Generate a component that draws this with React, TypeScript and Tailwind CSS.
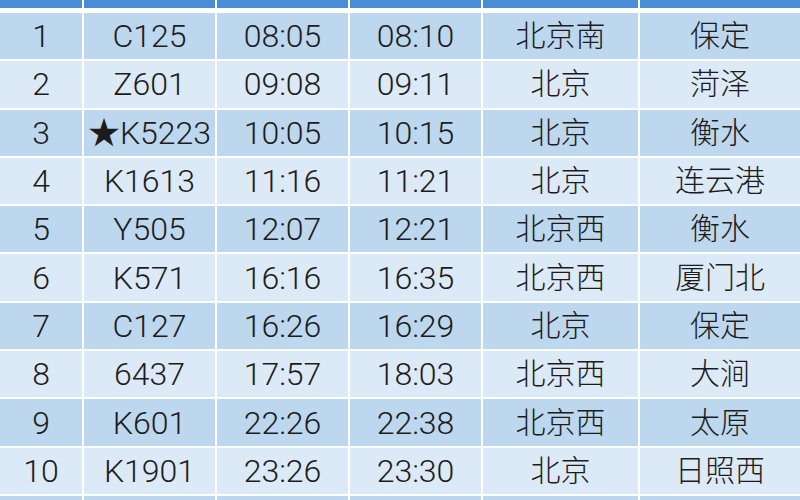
const rows = [
  ['1', 'C125', '08:05', '08:10', '北京南', '保定'],
  ['2', 'Z601', '09:08', '09:11', '北京', '菏泽'],
  ['3', '★K5223', '10:05', '10:15', '北京', '衡水'],
  ['4', 'K1613', '11:16', '11:21', '北京', '连云港'],
  ['5', 'Y505', '12:07', '12:21', '北京西', '衡水'],
  ['6', 'K571', '16:16', '16:35', '北京西', '厦门北'],
  ['7', 'C127', '16:26', '16:29', '北京', '保定'],
  ['8', '6437', '17:57', '18:03', '北京西', '大涧'],
  ['9', 'K601', '22:26', '22:38', '北京西', '太原'],
  ['10', 'K1901', '23:26', '23:30', '北京', '日照西'],
  ['', '', '', '', '', ''],
];

const cols = 'grid grid-cols-[82px_131px_131px_131px_155px_1fr] gap-x-[2px]';

export default function App() {
  return (
    <div className="w-[800px] h-[500px] overflow-hidden bg-white font-['Roboto','Liberation_Sans','Noto_Sans_CJK_SC',sans-serif] text-[#1c1c1c]">
      {/* header row, mostly cut off */}
      <div className={cols}>
        {Array.from({ length: 6 }).map((_, i) => (
          <div key={i} className="h-[8px] bg-[#4a8dd5]" />
        ))}
      </div>

      <div className="mt-[5px] flex flex-col gap-y-[2px]">
        {rows.map((r, i) => (
          <div key={i} className={cols}>
            {r.map((cell, j) => (
              <div
                key={j}
                className={`h-[46.3px] flex items-center justify-center leading-none font-light ${
                  j >= 4 ? 'text-[30px]' : 'text-[32px]'
                } ${i % 2 === 0 ? 'bg-[#bdd7ef]' : 'bg-[#dce9f6]'}`}
              >
                {cell}
              </div>
            ))}
          </div>
        ))}
      </div>
    </div>
  );
}
